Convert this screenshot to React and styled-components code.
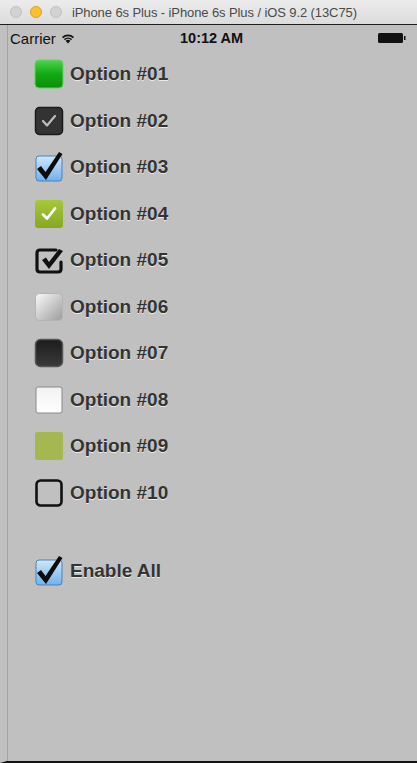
import React from "react";
import styled, { createGlobalStyle } from "styled-components";

const GlobalStyle = createGlobalStyle`
  html, body {
    margin: 0;
    padding: 0;
    background: #c0c0c0;
  }
  body {
    font-family: "Liberation Sans", Arial, sans-serif;
  }
`;

const Window = styled.div`
  width: 417px;
  height: 763px;
  display: flex;
  flex-direction: column;
  background: #c0c0c0;
  overflow: hidden;
`;

const TitleBar = styled.div`
  height: 24px;
  flex: none;
  display: flex;
  align-items: center;
  background: linear-gradient(#ececec, #dcdcdc);
  border-bottom: 1px solid #1e1e1e;
  padding-left: 10px;
`;

const Light = styled.span`
  width: 12px;
  height: 12px;
  border-radius: 50%;
  margin-right: 8px;
  background: ${(p) => p.color};
  border: 1px solid ${(p) => p.edge};
  box-sizing: border-box;
`;

const Title = styled.div`
  margin-left: 2px;
  font-family: "Liberation Sans", Arial, sans-serif;
  font-size: 13px;
  color: #4a4a4a;
  letter-spacing: -0.1px;
`;

const Screen = styled.div`
  flex: 1;
  display: flex;
  flex-direction: column;
  border-left: 7px solid #c0c0c0;
  box-shadow: inset 1px 0 0 #a4a4a4, -6px 0 0 #a8a8a8, -2px 0 0 #cfcfcf;
  border-bottom: 2px solid #111;
`;

const StatusBar = styled.div`
  height: 26px;
  display: flex;
  align-items: center;
  padding: 0 10px 0 3px;
  font-size: 15px;
  color: #111;
`;

const Carrier = styled.div`
  display: flex;
  align-items: center;
  gap: 5px;
  width: 163px;
`;

const Time = styled.div`
  flex: 1;
  font-weight: bold;
  font-size: 14.5px;
  padding-left: 7px;
`;

const List = styled.div`
  display: flex;
  flex-direction: column;
  padding: 0 0 0 27px;
`;

const Row = styled.div`
  height: 46.5px;
  display: flex;
  align-items: center;
  gap: 6px;
  margin-top: ${(p) => (p.spaced ? "31.5px" : "0")};
`;

const Label = styled.span`
  font-family: "Liberation Sans", Arial, sans-serif;
  font-weight: bold;
  font-size: 19px;
  color: #333;
  text-shadow: 0 1px 0 rgba(255, 255, 255, 0.7);
`;

const Box = styled.svg`
  width: 30px;
  height: 30px;
  flex: none;
  overflow: visible;
`;

const Wifi = () => (
  <svg width="14" height="11" viewBox="0 0 14 11">
    <path d="M7 10.5 L4.6 7.8 A3.5 3.5 0 0 1 9.4 7.8 Z" fill="#111" />
    <path d="M2.9 6 A6 6 0 0 1 11.1 6 L10 7.2 A4.4 4.4 0 0 0 4 7.2 Z" fill="#111" />
    <path d="M1 4 A8.6 8.6 0 0 1 13 4 L11.9 5.2 A7 7 0 0 0 2.1 5.2 Z" fill="#111" />
  </svg>
);

const Battery = () => (
  <svg width="29" height="12" viewBox="0 0 29 12">
    <rect x="0" y="1" width="25" height="10" rx="1.5" fill="#111" />
    <rect x="26" y="4" width="1.5" height="4" fill="#111" />
  </svg>
);

const bigCheck = "M3 17 L7 14 L11.5 20 L25 0 L28.5 2 L12 28 Z";

const Checkbox = ({ kind }) => {
  switch (kind) {
    case 1:
      return (
        <Box viewBox="0 0 30 30">
          <defs>
            <linearGradient id="g1" x1="0" y1="0" x2="0" y2="1">
              <stop offset="0" stopColor="#4fd24f" />
              <stop offset="0.5" stopColor="#13a913" />
              <stop offset="1" stopColor="#0b8f0b" />
            </linearGradient>
          </defs>
          <rect x="1" y="1" width="28" height="28" rx="4" fill="url(#g1)" stroke="#5cd65c" strokeWidth="1" />
        </Box>
      );
    case 2:
      return (
        <Box viewBox="0 0 30 30">
          <rect x="1.5" y="1.5" width="27" height="27" rx="4" fill="#333" stroke="#1a1a1a" strokeWidth="1.5" />
          <path d="M9 15 L13 19.5 L21 10" fill="none" stroke="#bdbdbd" strokeWidth="2.2" strokeLinecap="round" strokeLinejoin="round" />
        </Box>
      );
    case 3:
      return (
        <Box viewBox="0 0 30 30">
          <defs>
            <linearGradient id="g3" x1="0" y1="0" x2="0" y2="1">
              <stop offset="0" stopColor="#cfe6fb" />
              <stop offset="1" stopColor="#6fb1ee" />
            </linearGradient>
          </defs>
          <rect x="2" y="4" width="26" height="25" rx="3" fill="url(#g3)" stroke="#4b83b8" strokeWidth="1" />
          <path d={bigCheck} fill="#0c0c0c" />
        </Box>
      );
    case 4:
      return (
        <Box viewBox="0 0 30 30">
          <defs>
            <linearGradient id="g4" x1="0" y1="0" x2="0" y2="1">
              <stop offset="0" stopColor="#a8c83a" />
              <stop offset="1" stopColor="#86a823" />
            </linearGradient>
          </defs>
          <rect x="1" y="1" width="28" height="28" rx="3" fill="url(#g4)" />
          <path d="M9 15.5 L13 19.5 L21 9.5" fill="none" stroke="#fff" strokeWidth="2.8" strokeLinecap="round" strokeLinejoin="round" />
        </Box>
      );
    case 5:
      return (
        <Box viewBox="0 0 30 30">
          <path d="M22 5 L6 5 Q3 5 3 8 L3 24 Q3 27 6 27 L24 27 Q27 27 27 24 L27 17" fill="none" stroke="#111" strokeWidth="3.2" strokeLinecap="round" />
          <path d="M8 15 L12 12.5 L15 17 L25 4 L29 6 L15 24 Z" fill="#111" />
        </Box>
      );
    case 6:
      return (
        <Box viewBox="0 0 30 30">
          <defs>
            <linearGradient id="g6" x1="0" y1="0" x2="1" y2="1">
              <stop offset="0" stopColor="#fafafa" />
              <stop offset="1" stopColor="#9c9c9c" />
            </linearGradient>
          </defs>
          <rect x="1.5" y="1.5" width="27" height="27" rx="4" fill="url(#g6)" stroke="#b4b4b4" strokeWidth="1" />
        </Box>
      );
    case 7:
      return (
        <Box viewBox="0 0 30 30">
          <defs>
            <linearGradient id="g7" x1="0" y1="0" x2="0" y2="1">
              <stop offset="0" stopColor="#1c1c1c" />
              <stop offset="1" stopColor="#3a3a3a" />
            </linearGradient>
          </defs>
          <rect x="1.5" y="1.5" width="27" height="27" rx="5" fill="url(#g7)" stroke="#555" strokeWidth="1.5" />
        </Box>
      );
    case 8:
      return (
        <Box viewBox="0 0 30 30">
          <defs>
            <linearGradient id="g8" x1="0" y1="0" x2="0" y2="1">
              <stop offset="0" stopColor="#f2f2f2" />
              <stop offset="1" stopColor="#ffffff" />
            </linearGradient>
          </defs>
          <rect x="2" y="2" width="26" height="26" rx="2" fill="url(#g8)" stroke="#8a8a8a" strokeWidth="1" />
        </Box>
      );
    case 9:
      return (
        <Box viewBox="0 0 30 30">
          <rect x="1" y="1" width="28" height="28" rx="2" fill="#a4b751" />
        </Box>
      );
    case 10:
      return (
        <Box viewBox="0 0 30 30">
          <rect x="2.5" y="2.5" width="25" height="25" rx="4" fill="none" stroke="#111" strokeWidth="2.6" />
        </Box>
      );
    default:
      return null;
  }
};

const options = [1, 2, 3, 4, 5, 6, 7, 8, 9, 10];

const App = () => {
  return (
    <>
      <GlobalStyle />
      <Window>
        <TitleBar>
          <Light color="#d2d2d2" edge="#c2c2c2" />
          <Light color="#fcbf2e" edge="#e0a21a" />
          <Light color="#d2d2d2" edge="#c2c2c2" />
          <Title>iPhone 6s Plus - iPhone 6s Plus / iOS 9.2 (13C75)</Title>
        </TitleBar>
        <Screen>
          <StatusBar>
            <Carrier>
              Carrier <Wifi />
            </Carrier>
            <Time>10:12 AM</Time>
            <Battery />
          </StatusBar>
          <List>
            {options.map((n) => (
              <Row key={n}>
                <Checkbox kind={n} />
                <Label>Option #{String(n).padStart(2, "0")}</Label>
              </Row>
            ))}
            <Row spaced>
              <Checkbox kind={3} />
              <Label>Enable All</Label>
            </Row>
          </List>
        </Screen>
      </Window>
    </>
  );
};

export default App;
